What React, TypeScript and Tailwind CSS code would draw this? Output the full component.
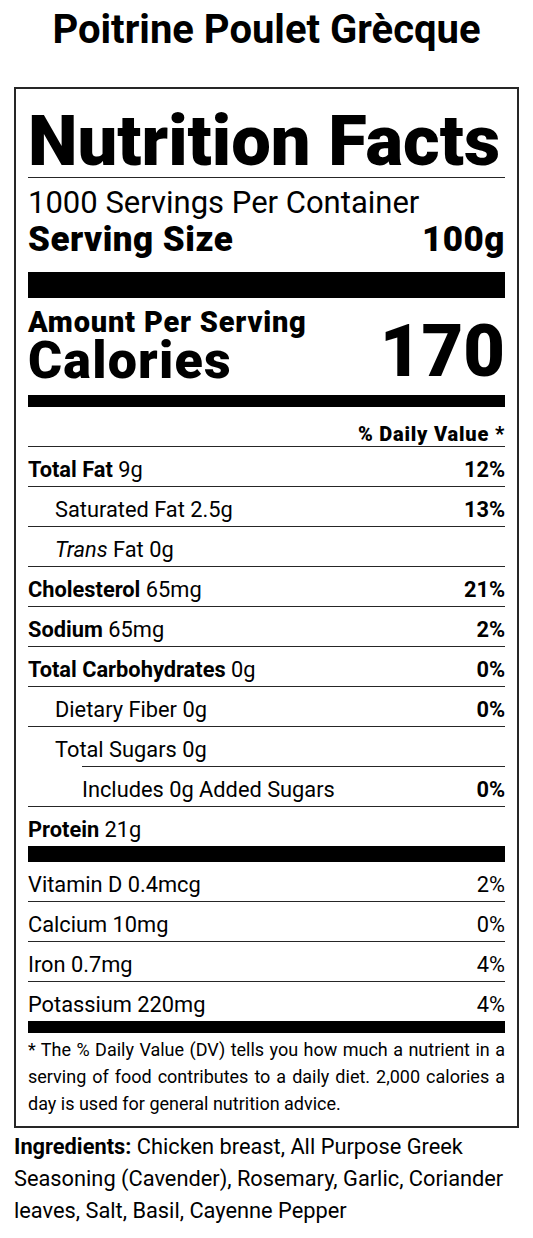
import type { ReactNode } from "react";

type RowProps = {
  children: ReactNode;
  dv?: string;
  indent?: "none" | "one" | "two";
  line?: "full" | "inset" | "none";
  boldDv?: boolean;
};

function Row({ children, dv, indent = "none", line = "full", boldDv = true }: RowProps) {
  const pad = indent === "one" ? "pl-[27px]" : indent === "two" ? "pl-[54px]" : "";
  return (
    <div>
      <div className={`flex justify-between pt-[6px] text-[21.8px] leading-[33px] ${pad}`}>
        <span>{children}</span>
        {dv && <span className={boldDv ? "font-bold" : ""}>{dv}</span>}
      </div>
      {line === "full" && <div className="h-px bg-neutral-800" />}
      {line === "inset" && <div className="ml-[54px] h-px bg-neutral-800" />}
    </div>
  );
}

export default function App() {
  return (
    <div className="min-h-screen bg-white font-['Roboto',sans-serif] text-black">
      <h1 className="pt-[8px] text-center text-[40px] font-bold leading-[44px]">
        Poitrine Poulet Grècque
      </h1>

      <div className="mx-[14px] mt-[35px] border-2 border-neutral-800 px-3">
        <div className="border-b border-neutral-800 pt-[17px] pb-px text-[70.5px] font-black leading-[70px]">
          Nutrition Facts
        </div>
        <div className="pt-[8px] text-[31px] leading-[34px]">1000 Servings Per Container</div>
        <div className="mt-px flex justify-between text-[35px] font-black leading-[38px] tracking-[0.5px]">
          <span>Serving Size</span>
          <span>100g</span>
        </div>
        <div className="mt-[13px] h-[26px] bg-black" />

        <div className="mt-[9px] flex items-start justify-between">
          <div>
            <div className="text-[29px] font-black leading-[30px] tracking-[0.8px]">Amount Per Serving</div>
            <div className="text-[52px] font-black leading-[48px] tracking-[1.2px]">Calories</div>
          </div>
          <div className="pt-[10px] text-[72px] font-black leading-[70px]">170</div>
        </div>
        <div className="mt-[8px] h-[12px] bg-black" />

        <div className="border-b border-neutral-800 pt-[15px] text-right text-[20px] font-black leading-[24px] tracking-[0.8px]">
          % Daily Value *
        </div>

        <Row dv="12%">
          <b>Total Fat</b> 9g
        </Row>
        <Row dv="13%" indent="one">
          Saturated Fat 2.5g
        </Row>
        <Row indent="one">
          <i>Trans</i> Fat 0g
        </Row>
        <Row dv="21%">
          <b>Cholesterol</b> 65mg
        </Row>
        <Row dv="2%">
          <b>Sodium</b> 65mg
        </Row>
        <Row dv="0%">
          <b>Total Carbohydrates</b> 0g
        </Row>
        <Row dv="0%" indent="one">
          Dietary Fiber 0g
        </Row>
        <Row indent="one" line="inset">
          Total Sugars 0g
        </Row>
        <Row dv="0%" indent="two">
          Includes 0g Added Sugars
        </Row>
        <Row line="none">
          <b>Protein</b> 21g
        </Row>
        <div className="h-[16px] bg-black" />

        <Row dv="2%" boldDv={false}>
          Vitamin D 0.4mcg
        </Row>
        <Row dv="0%" boldDv={false}>
          Calcium 10mg
        </Row>
        <Row dv="4%" boldDv={false}>
          Iron 0.7mg
        </Row>
        <Row dv="4%" boldDv={false} line="none">
          Potassium 220mg
        </Row>
        <div className="h-[12px] bg-black" />

        <p className="pt-[3px] pb-[9px] text-justify text-[18px] leading-[27px]">
          * The % Daily Value (DV) tells you how much a nutrient in a serving of food contributes to a
          daily diet. 2,000 calories a day is used for general nutrition advice.
        </p>
      </div>

      <p className="mt-[3px] px-[14px] text-[21.8px] leading-[32px]">
        <b>Ingredients:</b> Chicken breast, All Purpose Greek Seasoning (Cavender), Rosemary, Garlic,
        Coriander leaves, Salt, Basil, Cayenne Pepper
      </p>
    </div>
  );
}
